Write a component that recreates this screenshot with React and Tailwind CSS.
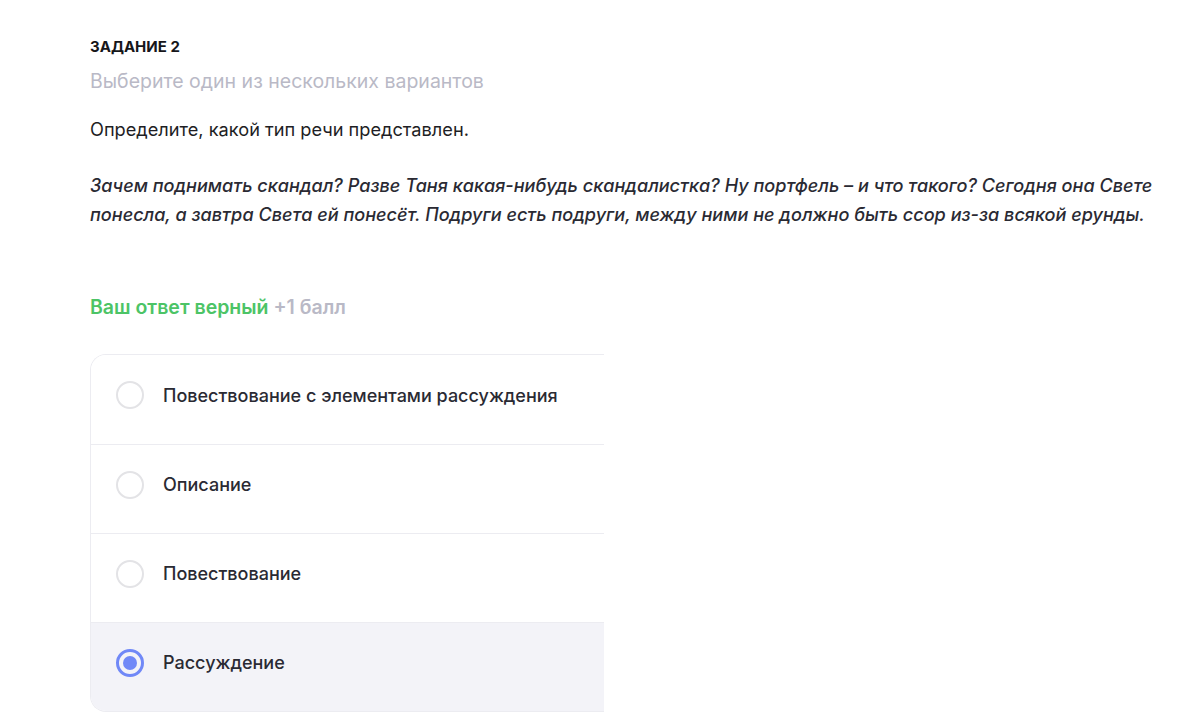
import React from 'react'

const options = [
  { id: 1, text: 'Повествование с элементами рассуждения' },
  { id: 2, text: 'Описание' },
  { id: 3, text: 'Повествование' },
  { id: 4, text: 'Рассуждение', selected: true },
]

function Radio({ checked }) {
  if (checked) {
    return (
      <span className="w-[28px] h-[28px] rounded-full border-[3px] border-[#7088f7] flex items-center justify-center shrink-0">
        <span className="w-[14px] h-[14px] rounded-full bg-[#7088f7]" />
      </span>
    )
  }
  return <span className="w-[28px] h-[28px] rounded-full border-[2.5px] border-[#e3e3e6] bg-white shrink-0" />
}

export default function App() {
  return (
    <div className="w-[1200px] h-[722px] bg-white overflow-hidden text-[#1e1e24]" style={{ fontFamily: 'Inter, "Noto Sans", sans-serif' }}>
      <div className="pl-[90px] pt-[38px]">
        <p className="text-[15px] font-bold leading-[18px] text-[#16161a]">ЗАДАНИЕ 2</p>
        <p className="mt-[13px] text-[19.5px] leading-[24px] text-[#b9b9c6]">Выберите один из нескольких вариантов</p>
        <p className="mt-[24px] text-[18.2px] leading-[24px] text-[#1e1e24]">Определите, какой тип речи представлен.</p>
        <p className="mt-[30px] w-[1080px] text-[18.1px] leading-[29px] italic font-medium text-[#2a2a33]">
          Зачем поднимать скандал? Разве Таня какая-нибудь скандалистка? Ну портфель – и что такого? Сегодня она Свете понесла, а завтра Света ей понесёт. Подруги есть подруги, между ними не должно быть ссор из-за всякой ерунды.
        </p>
        <p className="mt-[66px] text-[19.5px] leading-[24px] font-semibold">
          <span className="text-[#4cc466]">Ваш ответ верный</span>{' '}
          <span className="text-[#b9b9c6]">+1 балл</span>
        </p>
        <div className="mt-[35px] w-[514px] rounded-l-[16px] border border-r-0 border-[#ececf1] overflow-hidden">
          {options.map((o, i) => (
            <div
              key={o.id}
              className={`h-[89px] flex items-center gap-[19px] pl-[25px] pb-[9px] ${i > 0 ? 'border-t border-[#ececf1]' : ''} ${o.selected ? 'bg-[#f3f3f8]' : 'bg-white'}`}
            >
              <Radio checked={o.selected} />
              <span className="text-[18px] font-medium text-[#2a2a33]">{o.text}</span>
            </div>
          ))}
        </div>
      </div>
    </div>
  )
}
